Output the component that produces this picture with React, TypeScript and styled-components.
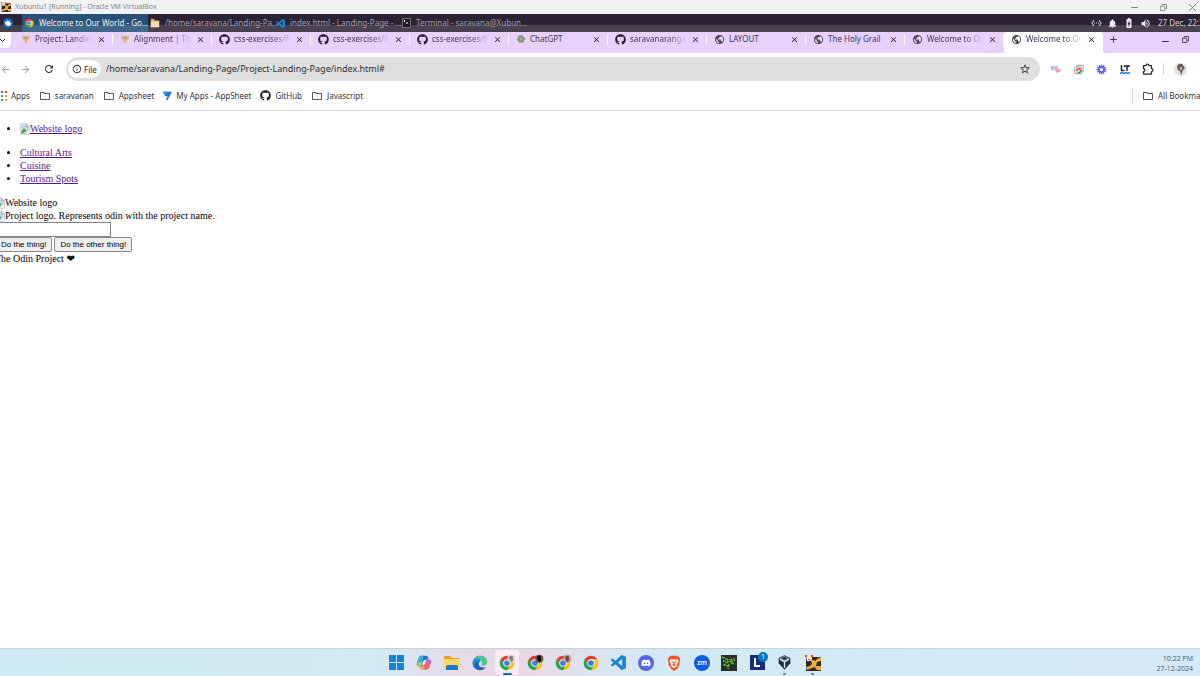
import React from "react";
import styled, { createGlobalStyle, css } from "styled-components";
import { FaGithub, FaDiscord } from "react-icons/fa";
import {
  MdPublic,
  MdStarBorder,
  MdRefresh,
  MdArrowBack,
  MdArrowForward,
  MdNotifications,
  MdBatteryChargingFull,
  MdVolumeUp,
  MdOutlineFolder,
  MdInfoOutline,
  MdClose,
  MdAdd,
} from "react-icons/md";

const ui = '"Noto Sans", "Open Sans", sans-serif';

const Global = createGlobalStyle`
  * { box-sizing: border-box; }
  html, body { margin: 0; overflow: hidden; }
  body { background: #fff; font-family: ${ui}; color: #2b2b2f; }
  svg { display: block; flex: none; }
`;

const plain = css`
  margin: 0;
  padding: 0;
  border: 0;
  background: none;
  color: inherit;
  font: inherit;
`;

const Desktop = styled.div`
  display: flex;
  flex-direction: column;
  min-height: 100vh;
  overflow: hidden;
`;

/* ---- VirtualBox title bar ---- */
const TitleBar = styled.header`
  display: flex;
  align-items: center;
  gap: 4px;
  height: 14px;
  padding-left: 1px;
  background: #f2f2f2;
  color: #858585;
  font-size: 7px;
  line-height: 12px;
`;
const Spacer = styled.div`
  flex: 1;
`;
const WindowButtons = styled.div`
  display: flex;
  gap: 13px;
`;
const WindowButton = styled.button`
  ${plain}
  display: grid;
  place-items: center;
  width: 16px;
  height: 12px;
`;

/* ---- Xfce panel ---- */
const Panel = styled.nav`
  display: flex;
  align-items: stretch;
  height: 18px;
  background: linear-gradient(#2b2334 0 11px, #49414f 11px);
  color: #a49fab;
  font-size: 8px;
  line-height: 16px;
  white-space: nowrap;
`;
const PanelMenu = styled.button`
  ${plain}
  display: flex;
  align-items: center;
  width: 22px;
  padding-left: 3px;
`;
const PanelTask = styled.button<{ $active?: boolean }>`
  ${plain}
  display: flex;
  align-items: center;
  gap: 5px;
  width: 126px;
  padding-left: 2px;
  text-align: left;
  ${(p) => p.$active && "background: linear-gradient(#285078 0 11px, #3f6789 11px); color: #f3f6fa;"}
`;
const Tray = styled.div`
  display: flex;
  align-items: center;
  gap: 5px;
  width: 109px;
  color: #eceaf0;
`;
const TrayClock = styled.time`
  margin-left: 2px;
  color: #d3d0d8;
`;

/* ---- Browser tab strip ---- */
const TabStrip = styled.div`
  display: flex;
  height: 21px;
  background: #e8d2fd;
  font-size: 8px;
  line-height: 12px;
  color: #42364f;
`;
const TabSearch = styled.button`
  ${plain}
  display: grid;
  place-items: center start;
  width: 11px;
  height: 16px;
  margin-right: 3px;
  background: #fff;
  border-radius: 0 0 5px 0;
`;
const Tab = styled.div<{ $active?: boolean }>`
  display: flex;
  align-items: center;
  flex: 0 1 99px;
  min-width: 0;
  height: 21px;
  padding: 0 4px 7px 7px;
  ${(p) =>
    p.$active
      ? `background: #fff;
         border-radius: 4px 4px 0 0;`
      : `background: linear-gradient(#fff, #fff) right 2px / 1px 11px no-repeat;`}
`;
const TabLabel = styled.button<{ $fade?: boolean }>`
  ${plain}
  display: flex;
  align-items: center;
  gap: 4px;
  flex: 1;
  min-width: 0;
  height: 14px;
  text-align: left;
  span {
    flex: 1;
    overflow: hidden;
    white-space: nowrap;
    ${(p) => p.$fade && "mask-image: linear-gradient(90deg, #000 65%, transparent);"}
  }
`;
const TabClose = styled.button`
  ${plain}
  display: grid;
  place-items: center;
  width: 16px;
  height: 14px;
  color: #2e2638;
`;
const StripButton = styled.button`
  ${plain}
  display: grid;
  place-items: center;
  width: 20px;
  height: 14px;
  color: #40354b;
`;
const StripControls = styled.div`
  display: flex;
  padding-right: 5px;
`;

/* ---- Address row ---- */
const Toolbar = styled.div`
  display: flex;
  align-items: center;
  height: 32px;
  background: #fff;
`;
const ToolButton = styled.button<{ $dim?: boolean }>`
  ${plain}
  display: grid;
  place-items: center;
  width: 23px;
  height: 20px;
  color: ${(p) => (p.$dim ? "#a2a2a6" : "#2f3033")};
`;
const NavButtons = styled.div`
  display: flex;
  width: 66px;
  > :first-child {
    width: 14px;
    place-items: center start;
  }
`;
const Omnibox = styled.div`
  display: flex;
  align-items: center;
  flex: 1;
  height: 24px;
  padding: 0 4px 0 2px;
  border-radius: 12px;
  background: #dfdfdf;
`;
const SiteChip = styled.button`
  ${plain}
  display: flex;
  align-items: center;
  gap: 2px;
  height: 18px;
  padding: 0 4px;
  border-radius: 9px;
  background: #fff;
  font-size: 8px;
`;
const Address = styled.input`
  ${plain}
  flex: 1;
  min-width: 0;
  margin-left: 5px;
  font-size: 9px;
  line-height: 16px;
  color: #2e2f33;
  outline: 0;
`;
const Extensions = styled.div`
  display: flex;
  align-items: center;
  width: 160px;
  padding-left: 4px;
`;
const Divider = styled.span<{ $gap: number }>`
  flex: none;
  width: 1px;
  height: 12px;
  margin: 0 ${(p) => p.$gap}px 0 4px;
  background: #dccfe8;
`;

/* ---- Bookmarks ---- */
const Bookmarks = styled.nav`
  display: flex;
  align-items: center;
  gap: 9px;
  height: 26px;
  padding: 0 0 4px 1px;
  border-bottom: 1px solid #d9d7dc;
  background: #fff;
  font-size: 8px;
  line-height: 14px;
  white-space: nowrap;
`;
const Bookmark = styled.a`
  display: flex;
  align-items: center;
  gap: 4px;
  color: #333338;
  text-decoration: none;
`;
const AllBookmarks = styled.div`
  display: flex;
  flex: none;
  align-items: center;
  width: 72px;
`;

/* ---- Web page ---- */
const Page = styled.main`
  flex: 1;
  padding: 11px 0;
  margin-left: -5px;
  background: #fff;
  color: #000;
  font-family: "Liberation Serif", serif;
  font-size: 10px;
  line-height: 13px;
`;
const List = styled.ul`
  margin: 0 0 11px;
  padding-left: 25px;
`;
const PageLink = styled.a`
  color: #551a8b;
  text-decoration: underline;
`;
const Missing = styled.span`
  display: inline-flex;
  align-items: center;
  height: 13px;
  vertical-align: top;
  text-decoration: inherit;
`;
const Row = styled.div`
  display: flex;
  align-items: center;
  gap: 2px;
`;
const TextField = styled.input`
  width: 116px;
  height: 15px;
  padding: 1px;
  border: 1px solid #858585;
  border-radius: 0;
  background: #fff;
  font: 8px "Liberation Sans", sans-serif;
`;
const PageButton = styled.button`
  height: 15px;
  padding: 0 5px;
  border: 1px solid #8a8a8a;
  border-radius: 2px;
  background: #efefef;
  color: #000;
  font: 8px "Liberation Sans", sans-serif;
`;
const Heart = styled.span`
  font-family: "DejaVu Sans", sans-serif;
`;

/* ---- Windows taskbar ---- */
const Taskbar = styled.footer`
  display: grid;
  grid-template-columns: 1fr auto 1fr;
  align-items: center;
  height: 28px;
  border-top: 1px solid #c3d3dc;
  background: linear-gradient(90deg, #cfeaf2, #d3ebf3 31%, #e5dcec 38%, #ecd6e6 43%, #dde3ef 49%, #d3eaf4 56%, #d5eaf6);
`;
const Apps = styled.div`
  display: grid;
  grid-template-columns: repeat(16, 1fr);
  width: 444px;
  margin-left: 9px;
  grid-column: 2;
`;
const AppButton = styled.button<{ $state?: "active" | "open" }>`
  ${plain}
  display: grid;
  place-items: center;
  justify-self: center;
  width: 24px;
  height: 25px;
  position: relative;
  border-radius: 3px;
  ${(p) => p.$state === "active" && "background: #f8edf4;"}
  &::after {
    content: "";
    position: absolute;
    bottom: 0;
    width: ${(p) => (p.$state === "active" ? 9 : 3)}px;
    height: ${(p) => (p.$state ? 2 : 0)}px;
    border-radius: 1px;
    background: ${(p) => (p.$state === "active" ? "#1c69b0" : "#6d7b83")};
  }
`;
const Badge = styled.span`
  position: absolute;
  top: 2px;
  right: 1px;
  width: 10px;
  height: 10px;
  border-radius: 50%;
  background: #0078c4;
  color: #fff;
  font-size: 7px;
  line-height: 10px;
`;
const Clock = styled.time`
  justify-self: end;
  padding: 2px 7px 0 0;
  color: #4b565d;
  font-family: "Open Sans", sans-serif;
  font-size: 7px;
  line-height: 10px;
  text-align: right;
`;

type Size = { size?: number };

const Chrome = ({ size = 16, face, shade }: Size & { face?: string; shade?: string }) => (
  <svg width={size} height={size} viewBox="0 0 24 24" overflow="visible">
    <path fill="#e33b2e" d="M2.5 6.5A11 11 0 0 1 21.5 6.5H12L7.2 14.7Z" />
    <path fill="#fbc116" d="M21.5 6.5A11 11 0 0 1 12 23L16.8 14.7L12 6.5Z" />
    <path fill="#2da14c" d="M12 23A11 11 0 0 1 2.5 6.5L7.2 14.7H16.8Z" />
    <circle cx="12" cy="12" r="5.6" fill="#fff" />
    <circle cx="12" cy="12" r="4.3" fill="#3b7de8" />
    {face && (
      <>
        <circle cx="18.5" cy="5.5" r="6" fill={face} />
        <path d="M15 3q4-4 6 0v5l-3 3-2-4Z" fill={shade} />
      </>
    )}
  </svg>
);

const Code = ({ size = 16 }: Size) => (
  <svg width={size} height={size} viewBox="0 0 24 24" fill="#1685d3">
    <path d="M23.15 2.587L18.21.21a1.494 1.494 0 0 0-1.705.29l-9.46 8.63-4.12-3.128a.999.999 0 0 0-1.276.057L.327 7.261A1 1 0 0 0 .326 8.74L3.899 12 .326 15.26a1 1 0 0 0 .001 1.479L1.65 17.94a.999.999 0 0 0 1.276.057l4.12-3.128 9.46 8.63a1.492 1.492 0 0 0 1.704.29l4.942-2.377A1.5 1.5 0 0 0 24 20.06V3.939a1.5 1.5 0 0 0-.85-1.352zm-5.146 14.861L10.826 12l7.178-5.448v10.896z" />
  </svg>
);

const VmIcon = ({ size = 10 }: Size) => (
  <svg width={size} height={size} viewBox="0 0 16 16">
    <path fill="#2c2a2e" d="M1 2h15v14H1z" />
    <path fill="#f3a83b" d="M6 6q2-2 4 0l2-2 4-2v4l-4 1-1 4 5 0v4q-5 1-6-3l-3 1-5 2-1-3 4-1 2-2Z" />
    <path fill="#fbe3c4" d="M1 1h6v4q-3 2-5 1Z" />
    <path fill="#d8483f" d="M0 0h2v2H0zM6 0h2v2H6zM3 4h2v1H3z" />
  </svg>
);

const FolderFill = () => (
  <svg width="10" height="10" viewBox="0 0 12 12">
    <path fill="#d9a75b" d="M1 1h4l1 2h5v8H1z" />
    <path fill="#f5ddb1" d="M1 4h10v7H1z" />
  </svg>
);

const OdinMark = () => (
  <svg width="10" height="10" viewBox="0 0 12 12">
    <path fill="#dfb877" d="m2 1 2 2h4l2-2 1 4-3 3-2 4-2-4-3-3Z" />
    <path fill="#a8988f" d="M4 3h4L7 6H5Z" />
  </svg>
);

const Gpt = () => (
  <svg width="10" height="10" viewBox="0 0 20 20">
    <circle cx="10" cy="10" r="10" fill="#f7f4f0" />
    <circle cx="10" cy="10" r="5" fill="#a9ada3" />
    <g fill="none" stroke="#656b5f" strokeWidth="1.4">
      {[0, 60, 120, 180, 240, 300].map((a) => (
        <path key={a} d="M10 3a3.6 3.6 0 0 1 5.500 3.500v4l-3.500 2" transform={`rotate(${a} 10 10)`} />
      ))}
    </g>
  </svg>
);

const Broken = () => (
  <svg width="10" height="12" viewBox="0 0 15 16" preserveAspectRatio="none">
    <path d="M1 1h9l4 4v10H1z" fill="#fff" stroke="#b3b8bd" />
    <path d="M2 2h8l3 3v3l-5 3-6-1z" fill="#c3d7f4" />
    <path d="M2 14v-3l4-4 4 3-5 4z" fill="#4ba643" />
    <path d="M10 1v4h4M14 8l-8 7" fill="none" stroke="#96a1aa" />
  </svg>
);

type Kind = "odin" | "github" | "gpt" | "globe";
const Favicon = ({ kind }: { kind: Kind }) => {
  if (kind === "odin") return <OdinMark />;
  if (kind === "github") return <FaGithub size={11} color="#241d2c" />;
  if (kind === "gpt") return <Gpt />;
  return <MdPublic size={11} color="#4f4c55" />;
};

const tabs: { kind: Kind; title: string; fade?: boolean }[] = [
  { kind: "odin", title: "Project: Landing", fade: true },
  { kind: "odin", title: "Alignment | The", fade: true },
  { kind: "github", title: "css-exercises/fo", fade: true },
  { kind: "github", title: "css-exercises/fo", fade: true },
  { kind: "github", title: "css-exercises/fl", fade: true },
  { kind: "gpt", title: "ChatGPT" },
  { kind: "github", title: "saravanaranga", fade: true },
  { kind: "globe", title: "LAYOUT" },
  { kind: "globe", title: "The Holy Grail" },
  { kind: "globe", title: "Welcome to Our", fade: true },
  { kind: "globe", title: "Welcome to Our", fade: true },
];

const folder = <MdOutlineFolder size={12} color="#55555b" />;
const bookmarks = [
  {
    name: "Apps",
    icon: (
      <svg width="6" height="10" viewBox="0 0 6 10">
        {["#e34133", "#e34133", "#4285f4", "#f2a600", "#34a853", "#f2a600"].map((c, i) => (
          <rect key={i} x={(i % 2) * 4} y={Math.floor(i / 2) * 4} width="2" height="2" fill={c} />
        ))}
      </svg>
    ),
  },
  { name: "saravanan", icon: folder },
  { name: "Appsheet", icon: folder },
  {
    name: "My Apps - AppSheet",
    icon: (
      <svg width="9" height="9" viewBox="0 0 12 12">
        <path fill="#1a73e8" d="M0 1h12L6 12H4l2-5H3Z" />
        <path fill="#3f86ee" d="M0 1h7L5 5H3Z" />
      </svg>
    ),
  },
  { name: "GitHub", icon: <FaGithub size={11} color="#1f2024" /> },
  { name: "Javascript", icon: folder },
];

const extensions = [
  {
    name: "Video captions",
    icon: (
      <svg width="10" height="9" viewBox="0 0 12 10">
        <path fill="#b0a8dc" d="M0 1h8v5H0z" />
        <path stroke="#fff" strokeWidth=".7" d="M1 3h6M1 5h6" />
        <path fill="#e9a4b8" d="M5 5l4-1 3 1-1 3-5 1Z" />
      </svg>
    ),
  },
  {
    name: "Screen capture",
    icon: (
      <svg width="10" height="11" viewBox="0 0 12 12" fill="none">
        <path d="M3 3V1h8v8H9" stroke="#9a8b83" />
        <rect x="1" y="3" width="8" height="8" rx="1" fill="#fff" stroke="#8d8d91" />
        <path d="M3 8a3 3 0 0 1 5-2" stroke="#df4538" strokeWidth="2" />
        <path d="M4 9.500q4 1 4-3" stroke="#45a35c" strokeWidth="2" />
      </svg>
    ),
  },
  {
    name: "Loom",
    icon: (
      <svg width="11" height="11" viewBox="0 0 24 24" stroke="#6865f0" fill="none">
        {[0, 30, 60, 90, 120, 150].map((a) => (
          <path key={a} strokeWidth="3" d="M12 1v5M12 18v5" transform={`rotate(${a} 12 12)`} />
        ))}
        <circle cx="12" cy="12" r="5.5" strokeWidth="4" />
      </svg>
    ),
  },
  {
    name: "LanguageTool",
    icon: (
      <svg width="10" height="11" viewBox="0 0 20 22" fill="none">
        <path d="M3 2v11h6M8 4h11M14 4v10M9 3v3M18 3v3" stroke="#20222c" strokeWidth="3" />
        <path d="m0 19 4-2 4 2 4-2 4 2 4-2" stroke="#1583d8" strokeWidth="3" />
      </svg>
    ),
  },
  {
    name: "Extensions",
    icon: (
      <svg width="12" height="12" viewBox="0 0 24 24" fill="none" stroke="#26272b" strokeWidth="2.5">
        <path d="M3 5h5a3 3 0 0 1 6 0h5v6a3 3 0 0 1 0 6v5H3v-5a3 3 0 0 0 0-6Z" strokeLinejoin="round" />
      </svg>
    ),
  },
];

const apps: { name: string; icon: React.ReactNode; state?: "active" | "open"; badge?: number }[] = [
  {
    name: "Start",
    icon: (
      <svg width="15" height="15" viewBox="0 0 15 15" fill="#1583d6">
        <path d="M0 0h7v7H0zM8 0h7v7H8zM0 8h7v7H0zM8 8h7v7H8z" />
      </svg>
    ),
  },
  {
    name: "Copilot",
    icon: (
      <svg width="16" height="15" viewBox="0 0 24 24">
        <path fill="#2470d8" d="M8 1h8q2 0 3 4l1 2h-5q-2 0-3 4l-2 7H4q-5 0-3-6l2-6q1-5 5-5Z" />
        <path fill="#35b4c9" d="M8 1h3L8 18H4q-5 0-3-6l2-6q1-5 5-5Z" />
        <path fill="#a8cf45" d="M1 12l8-1-1 7H4q-4 0-3-6Z" />
        <path fill="#b565dd" d="M15 7h5q5 0 3 6l-2 5q-1 5-5 5h-4q3-2 4-5Z" />
        <path fill="#f2636e" d="M5 18h4q2 0 3-4l1-3h9l-1 6q-1 6-5 6H9q-3 0-4-5Z" />
        <path fill="#f5a34b" d="M5 18h4q2 0 3-3l1 8H9q-3 0-4-5Z" />
        <path fill="#eef3fb" d="m11 9 4-1-2 7-4 1Z" />
      </svg>
    ),
  },
  {
    name: "File Explorer",
    icon: (
      <svg width="16" height="14" viewBox="0 0 16 14">
        <path fill="#e6a11f" d="M0 0h6l2 2h8v5H0z" />
        <path fill="#fdd667" d="M0 3h16v11H0z" />
        <path fill="#1679c9" d="M2 14v-3q0-2 2-2h8q2 0 2 2v3Z" />
      </svg>
    ),
  },
  {
    name: "Edge",
    icon: (
      <svg width="16" height="16" viewBox="0 0 24 24">
        <path fill="#1566bd" d="M1 12a11 11 0 0 0 11 11c4 0 7-2 9-5-5 2-11 0-11-5 0-2 1-3 2-4-3-5-11-2-11 3Z" />
        <path fill="#2ba3e0" d="M1 12C1 5 6 1 12 1c5 0 9 3 10 7H12C8 5 2 7 1 12Z" />
        <path fill="#49c98e" d="M12 1c6 0 11 4 11 9 0 4-3 6-6 6-2 0-4-1-3-2 2-2 1-6-2-8-2-2-5-2-7-1 2-3 4-4 7-4Z" />
        <path fill="#1c86cf" d="M1 12c0-5 7-8 11-4 1 1 1 2 0 3-3-3-8-1-8 4 0 3 2 6 5 7-5-1-8-5-8-10Z" />
      </svg>
    ),
  },
  { name: "Chrome, first profile", icon: <Chrome face="#d9d3d2" shade="#8d7e7e" />, state: "active" },
  { name: "Chrome, second profile", icon: <Chrome face="#5b5350" shade="#0c0a0b" /> },
  { name: "Chrome, third profile", icon: <Chrome face="#b9a29b" shade="#6d4a45" /> },
  { name: "Chrome", icon: <Chrome /> },
  { name: "Visual Studio Code", icon: <Code size={15} /> },
  {
    name: "Discord",
    icon: (
      <svg width="16" height="16" viewBox="0 0 16 16">
        <circle cx="8" cy="8" r="8" fill="#5965e8" />
        <FaDiscord x="3" y="3" size={10} color="#fff" />
      </svg>
    ),
  },
  {
    name: "Brave",
    icon: (
      <svg width="14" height="16" viewBox="0 0 20 24">
        <path fill="#f4511e" d="m5 1-4 4 1 10 3 5 5 4 5-4 3-5 1-10-4-4Z" />
        <path fill="#fff" d="m5 6 3 1 2-1 2 1 3-1 2 4-3 4 1 2-5 4-5-4 1-2-3-4Z" />
        <path fill="#f4511e" d="m5 9 4 1-1 2Zm10 0-4 1 1 2ZM9 10h2v4l2 1-3 2-3-2 2-1Z" />
      </svg>
    ),
  },
  {
    name: "Zoom",
    icon: (
      <svg width="16" height="16" viewBox="0 0 16 16">
        <circle cx="8" cy="8" r="8" fill="#0b5ce6" />
        <text x="8" y="10" textAnchor="middle" fill="#fff" fontSize="7" fontWeight="600">
          zm
        </text>
      </svg>
    ),
  },
  {
    name: "Process monitor",
    icon: (
      <svg width="16" height="16" viewBox="0 0 16 16">
        <path fill="#28302b" d="M0 0h16v16H0z" />
        <path
          d="M1 2l6 3 7-1M2 6l5 1-4 3 4 1M9 7l5-2M8 9l-1 5M10 8l4 1"
          fill="none"
          stroke="#68b82f"
          strokeWidth="1.5"
          strokeDasharray="3 1"
        />
      </svg>
    ),
  },
  {
    name: "Lightshot",
    badge: 1,
    icon: (
      <svg width="15" height="15" viewBox="0 0 15 15">
        <path fill="#172a80" d="M0 0h15v15H0z" />
        <path d="M5 3v8h5" fill="none" stroke="#fff" strokeWidth="2" />
      </svg>
    ),
  },
  {
    name: "VirtualBox",
    state: "open",
    icon: (
      <svg width="13" height="15" viewBox="0 0 20 22">
        <path fill="#1c3147" d="m10 0 9 4v8l-9 10-9-10V4Z" />
        <path fill="#8fabc0" d="m10 1 8 4-8 4-8-4Z" />
        <path d="m3 6 7 4 7-4M10 10v9" fill="none" stroke="#e9f4fa" strokeWidth="2" />
        <path fill="#1c3147" d="m10 2 5 3-5 2-5-2Z" />
      </svg>
    ),
  },
  { name: "Xubuntu1", icon: <VmIcon size={16} />, state: "open" },
];

const RestoreIcon = ({ size = 8 }: Size) => (
  <svg width={size} height={size} viewBox="0 0 8 8" fill="none" stroke="currentColor">
    <path d="M.5 2.5h5v5h-5zM2.5 2V.5h5v5H6" />
  </svg>
);

export default function App() {
  return (
    <Desktop>
      <Global />
      <TitleBar>
        <VmIcon />
        <span>Xubuntu1 [Running] - Oracle VM VirtualBox</span>
        <Spacer />
        <WindowButtons>
          <WindowButton aria-label="Minimize">
            <svg width="7" height="7" viewBox="0 0 7 7" stroke="currentColor">
              <path d="M0 3.5h7" />
            </svg>
          </WindowButton>
          <WindowButton aria-label="Restore">
            <RestoreIcon size={7} />
          </WindowButton>
          <WindowButton aria-label="Close">
            <svg width="7" height="7" viewBox="0 0 7 7" stroke="currentColor">
              <path d="m0 0 7 7M7 0 0 7" />
            </svg>
          </WindowButton>
        </WindowButtons>
      </TitleBar>

      <Panel>
        <PanelMenu aria-label="Applications">
          <svg width="10" height="10" viewBox="0 0 12 12">
            <circle cx="6" cy="6" r="6" fill="#1266bd" />
            <path fill="#fff" d="M2 4l2 1 1-3 1 2 2-1v2l2 1-1 3-3 1-3-2Z" />
          </svg>
        </PanelMenu>
        <PanelTask $active>
          <Chrome size={10} />
          Welcome to Our World - Go...
        </PanelTask>
        <PanelTask>
          <FolderFill />
          /home/saravana/Landing-Pa...
        </PanelTask>
        <PanelTask>
          <Code size={9} />
          index.html - Landing-Page - ...
        </PanelTask>
        <PanelTask>
          <svg width="9" height="10" viewBox="0 0 9 10">
            <path fill="#1d1c20" stroke="#77727d" d="M.5.5h8v9h-8z" />
            <path d="m2 2 1 1-1 1M4 5h2" fill="none" stroke="#fff" />
          </svg>
          Terminal - saravana@Xubun...
        </PanelTask>
        <Spacer />
        <Tray>
          <svg width="11" height="8" viewBox="0 0 11 8" fill="none" stroke="currentColor">
            <path d="M3 1 .8 4 3 7M8 1l2.2 3L8 7M3 4h1M5 4h1M7 4h1" />
          </svg>
          <MdNotifications size={11} />
          <MdBatteryChargingFull size={12} />
          <MdVolumeUp size={11} />
          <TrayClock>27 Dec, 22:22</TrayClock>
        </Tray>
      </Panel>

      <TabStrip>
        <TabSearch aria-label="Search tabs">
          <svg width="6" height="5" viewBox="0 0 6 5" fill="none" stroke="#333">
            <path d="m0 1 2.5 2.5L5 1" />
          </svg>
        </TabSearch>
        {tabs.map((t, i) => (
          <Tab key={i} $active={i === tabs.length - 1}>
            <TabLabel $fade={t.fade}>
              <Favicon kind={t.kind} />
              <span>{t.title}</span>
            </TabLabel>
            <TabClose aria-label={`Close ${t.title}`}>
              <MdClose size={9} />
            </TabClose>
          </Tab>
        ))}
        <StripButton aria-label="New tab">
          <MdAdd size={11} />
        </StripButton>
        <Spacer />
        <StripControls>
          <StripButton aria-label="Minimize browser">
            <svg width="7" height="7" viewBox="0 0 7 7" stroke="currentColor">
              <path d="M0 5.5h7" />
            </svg>
          </StripButton>
          <StripButton aria-label="Restore browser">
            <RestoreIcon size={7} />
          </StripButton>
        </StripControls>
      </TabStrip>

      <Toolbar>
        <NavButtons>
          <ToolButton $dim aria-label="Back">
            <MdArrowBack size={11} />
          </ToolButton>
          <ToolButton $dim aria-label="Forward">
            <MdArrowForward size={11} />
          </ToolButton>
          <ToolButton aria-label="Reload">
            <MdRefresh size={12} />
          </ToolButton>
        </NavButtons>
        <Omnibox>
          <SiteChip>
            <MdInfoOutline size={10} />
            File
          </SiteChip>
          <Address aria-label="Address" defaultValue="/home/saravana/Landing-Page/Project-Landing-Page/index.html#" />
          <ToolButton aria-label="Bookmark this page">
            <MdStarBorder size={12} />
          </ToolButton>
        </Omnibox>
        <Extensions>
          {extensions.map((e) => (
            <ToolButton key={e.name} aria-label={e.name}>
              {e.icon}
            </ToolButton>
          ))}
          <Divider $gap={5} />
          <ToolButton aria-label="Profile">
            <svg width="13" height="13" viewBox="0 0 13 13">
              <circle cx="6.5" cy="6.5" r="6.5" fill="#e5dfe0" />
              <path fill="#6a5c5d" d="M3 4q1-4 5-3l3 4-2 2-2 5-1-4-2-1Z" />
              <path fill="#c9b0a9" d="M6 4h2v3H6z" />
            </svg>
          </ToolButton>
        </Extensions>
      </Toolbar>

      <Bookmarks>
        {bookmarks.map((b) => (
          <Bookmark key={b.name} href="#">
            {b.icon}
            {b.name}
          </Bookmark>
        ))}
        <Spacer />
        <AllBookmarks>
          <Divider $gap={9} />
          <Bookmark href="#">
            {folder}
            All Bookmarks
          </Bookmark>
        </AllBookmarks>
      </Bookmarks>

      <Page>
        <List>
          <li>
            <PageLink href="#">
              <Missing>
                <Broken />
                Website logo
              </Missing>
            </PageLink>
          </li>
        </List>
        <List>
          {["Cultural Arts", "Cuisine", "Tourism Spots"].map((n) => (
            <li key={n}>
              <PageLink href="#">{n}</PageLink>
            </li>
          ))}
        </List>
        <Row>
          <Missing>
            <Broken />
            Website logo
          </Missing>
        </Row>
        <Row>
          <Missing>
            <Broken />
            Project logo. Represents odin with the project name.
          </Missing>
        </Row>
        <Row>
          <TextField aria-label="Text" />
        </Row>
        <Row>
          <PageButton>Do the thing!</PageButton>
          <PageButton>Do the other thing!</PageButton>
        </Row>
        <div>
          The Odin Project <Heart>❤</Heart>
        </div>
      </Page>

      <Taskbar>
        <Apps>
          {apps.map((a) => (
            <AppButton key={a.name} aria-label={a.name} $state={a.state}>
              {a.icon}
              {a.badge && <Badge>{a.badge}</Badge>}
            </AppButton>
          ))}
        </Apps>
        <Clock>
          10:22 PM
          <br />
          27-12-2024
        </Clock>
      </Taskbar>
    </Desktop>
  );
}
